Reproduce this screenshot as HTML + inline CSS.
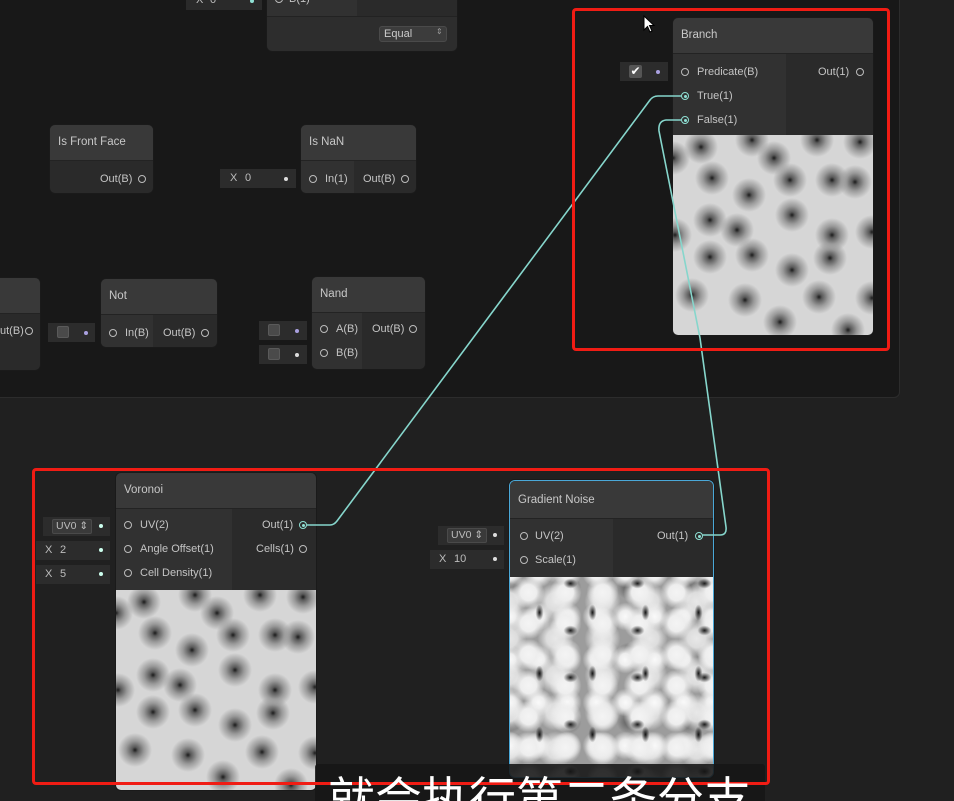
<!DOCTYPE html>
<html style="overflow:hidden;width:954px;height:801px"><head><meta charset="utf-8">
<style>
*{margin:0;padding:0;box-sizing:border-box}
body{width:954px;height:801px;background:#202020;position:relative;overflow:hidden;font-family:"Liberation Sans","Noto Sans CJK SC",sans-serif;color:#c4c4c4;font-size:11px}
.a{position:absolute}
.group{left:-10px;top:-10px;width:910px;height:408px;background:#181818;border:1px solid #2c2c2c;border-radius:6px}
.node{position:absolute;background:#2a2a2a;border-radius:5px;overflow:hidden;box-shadow:0 0 0 1px #1a1a1a}
.hd{position:absolute;left:0;top:0;right:0;background:#393939;border-bottom:1px solid #232323;color:#c8c8c8;font-size:11.5px;padding-left:8px}
.inp{position:absolute;background:#313131}
.fld{position:absolute;background:#2c2c2c;color:#bdbdbd;font-size:11px}
.t{position:absolute;white-space:nowrap}
.port{position:absolute;width:8px;height:8px;border:1px solid #bbb;border-radius:50%}
.port.on{border-color:#8fe0d4}
.port.on::after{content:"";position:absolute;left:1.5px;top:1.5px;width:3px;height:3px;border-radius:50%;background:#8fe0d4}
.dot{position:absolute;width:4px;height:4px;border-radius:50%;background:#ddd}
.cb{position:absolute;width:12px;height:12px;background:#4a4a4a;border:1px solid #5a5a5a;border-radius:2px}
.red{position:absolute;border:3px solid #f01c14;border-radius:4px}
.dd{position:absolute;left:9px;top:2px;width:40px;height:15px;background:#3a3a3a;border:1px solid #4a4a4a;border-radius:2px;font-size:10.5px;padding-left:3px;line-height:13px;white-space:nowrap}
.vor{background-color:#d6d6d6;
--s:#1a1a1a 0,#5a5a5a 3px,#9a9a9a 9px,rgba(200,200,200,0) 17px;
background-image:
radial-gradient(circle at 28px 12px,var(--s)),
radial-gradient(circle at 79px 5px,var(--s)),
radial-gradient(circle at 101px 23px,var(--s)),
radial-gradient(circle at 144px 5px,var(--s)),
radial-gradient(circle at 187px 7px,var(--s)),
radial-gradient(circle at 39px 43px,var(--s)),
radial-gradient(circle at 76px 60px,var(--s)),
radial-gradient(circle at 117px 45px,var(--s)),
radial-gradient(circle at 159px 45px,var(--s)),
radial-gradient(circle at 182px 47px,var(--s)),
radial-gradient(circle at 37px 85px,var(--s)),
radial-gradient(circle at 64px 95px,var(--s)),
radial-gradient(circle at 119px 80px,var(--s)),
radial-gradient(circle at 159px 100px,var(--s)),
radial-gradient(circle at 37px 122px,var(--s)),
radial-gradient(circle at 79px 120px,var(--s)),
radial-gradient(circle at 119px 135px,var(--s)),
radial-gradient(circle at 157px 123px,var(--s)),
radial-gradient(circle at 19px 160px,var(--s)),
radial-gradient(circle at 72px 165px,var(--s)),
radial-gradient(circle at 146px 162px,var(--s)),
radial-gradient(circle at 107px 187px,var(--s)),
radial-gradient(circle at 0px 23px,var(--s)),
radial-gradient(circle at 2px 100px,var(--s)),
radial-gradient(circle at 199px 97px,var(--s)),
radial-gradient(circle at 199px 163px,var(--s)),
radial-gradient(circle at 175px 195px,var(--s))}
.gn{background-color:#9c9c9c;
background-image:
radial-gradient(ellipse 4px 8px,#111 0,rgba(0,0,0,0) 100%),
radial-gradient(ellipse 7px 5px,#1a1a1a 0,rgba(0,0,0,0) 100%),
radial-gradient(circle,#f4f4f4 0,#eee 8px,rgba(238,238,238,0) 16px),
radial-gradient(circle,#fafafa 0,#eee 6px,rgba(238,238,238,0) 14px),
radial-gradient(circle,#e8e8e8 0,#ddd 9px,rgba(220,220,220,0) 18px),
radial-gradient(circle,#555 0,rgba(60,60,60,0) 12px);
background-size:53px 61px,67px 47px,37px 31px,29px 43px,47px 37px,59px 67px;
background-position:3px 5px,27px 30px,0 0,14px 18px,22px 6px,30px 44px}
</style></head><body>

<div class="a group"></div>

<div class="fld" style="left:186px;top:-8px;width:76px;height:18px;background:#2a2a2a"><span class="t" style="left:10px;top:2px">X</span><span class="t" style="left:24px;top:2px">0</span></div>
<div class="dot" style="left:250px;top:-1px;background:#8fe0d4"></div>
<div class="node" style="left:267px;top:-10px;width:190px;height:61px;background:#2d2d2d">
  <div class="a" style="left:0;top:0;width:90px;height:26px;background:#313131"></div>
  <div class="a" style="left:90px;top:0;right:0;height:26px;background:#2a2a2a"></div>
  <div class="a" style="left:0;top:26px;right:0;height:1px;background:#222"></div>
  <div class="port" style="left:8px;top:5px"></div>
  <span class="t" style="left:22px;top:3px">B(1)</span>
  <div class="a" style="left:112px;top:36px;width:68px;height:16px;background:#3c3c3c;border:1px solid #4a4a4a;border-radius:3px"><span class="t" style="left:4px;top:1px;color:#ccc">Equal</span><span class="t" style="left:56px;top:0px;font-size:8px;color:#999">⇕</span></div>
</div>

<div class="node" style="left:50px;top:125px;width:103px;height:68px">
  <div class="hd" style="height:36px;line-height:35px">Is Front Face</div>
  <span class="t" style="left:50px;top:48px">Out(B)</span>
  <div class="port" style="left:88px;top:50px"></div>
</div>

<div class="fld" style="left:220px;top:169px;width:76px;height:19px"><span class="t" style="left:10px;top:3px">X</span><span class="t" style="left:25px;top:3px">0</span></div>
<div class="dot" style="left:284px;top:177px"></div>
<div class="node" style="left:301px;top:125px;width:115px;height:68px">
  <div class="hd" style="height:36px;line-height:35px">Is NaN</div>
  <div class="inp" style="left:0;top:36px;width:53px;height:32px"></div>
  <div class="port" style="left:8px;top:50px"></div>
  <span class="t" style="left:24px;top:48px">In(1)</span>
  <span class="t" style="left:62px;top:48px">Out(B)</span>
  <div class="port" style="left:100px;top:50px"></div>
</div>

<div class="node" style="left:-60px;top:278px;width:100px;height:92px">
  <div class="hd" style="height:36px"></div>
  <span class="t" style="left:60px;top:47px">ut(B)</span>
  <div class="port" style="left:85px;top:49px"></div>
</div>

<div class="fld" style="left:48px;top:323px;width:47px;height:19px"><div class="cb" style="left:9px;top:3px"></div></div>
<div class="dot" style="left:84px;top:331px;background:#a9a0e0"></div>
<div class="node" style="left:101px;top:279px;width:116px;height:68px">
  <div class="hd" style="height:36px;line-height:35px">Not</div>
  <div class="inp" style="left:0;top:36px;width:52px;height:32px"></div>
  <div class="port" style="left:8px;top:50px"></div>
  <span class="t" style="left:24px;top:48px">In(B)</span>
  <span class="t" style="left:62px;top:48px">Out(B)</span>
  <div class="port" style="left:100px;top:50px"></div>
</div>

<div class="fld" style="left:259px;top:321px;width:48px;height:19px"><div class="cb" style="left:9px;top:3px"></div></div>
<div class="fld" style="left:259px;top:345px;width:48px;height:19px"><div class="cb" style="left:9px;top:3px"></div></div>
<div class="dot" style="left:295px;top:329px;background:#a9a0e0"></div>
<div class="dot" style="left:295px;top:353px"></div>
<div class="node" style="left:312px;top:277px;width:113px;height:92px">
  <div class="hd" style="height:36px;line-height:35px">Nand</div>
  <div class="inp" style="left:0;top:36px;width:50px;height:56px"></div>
  <div class="port" style="left:8px;top:48px"></div>
  <span class="t" style="left:24px;top:46px">A(B)</span>
  <div class="port" style="left:8px;top:72px"></div>
  <span class="t" style="left:24px;top:70px">B(B)</span>
  <span class="t" style="left:60px;top:46px">Out(B)</span>
  <div class="port" style="left:97px;top:48px"></div>
</div>

<div class="fld" style="left:620px;top:62px;width:48px;height:19px"><div class="a" style="left:9px;top:3px;width:13px;height:13px;background:#555;border-radius:2px;color:#fff;font-size:12px;line-height:12px;text-align:center">✔</div></div>
<div class="dot" style="left:656px;top:70px;background:#a9a0e0"></div>
<div class="node" style="left:673px;top:18px;width:200px;height:317px">
  <div class="hd" style="height:36px;line-height:35px">Branch</div>
  <div class="inp" style="left:0;top:36px;width:113px;height:81px"></div>
  <div class="port" style="left:8px;top:50px"></div>
  <span class="t" style="left:24px;top:48px">Predicate(B)</span>
  <div class="port on" style="left:8px;top:74px"></div>
  <span class="t" style="left:24px;top:72px">True(1)</span>
  <div class="port on" style="left:8px;top:98px"></div>
  <span class="t" style="left:24px;top:96px">False(1)</span>
  <span class="t" style="left:145px;top:48px">Out(1)</span>
  <div class="port" style="left:183px;top:50px"></div>
  <div class="a vor" style="left:0;top:117px;width:200px;height:200px"></div>
</div>

<div class="fld" style="left:43px;top:517px;width:67px;height:19px"><div class="dd">UV0 ⇕</div></div>
<div class="fld" style="left:36px;top:541px;width:74px;height:19px"><span class="t" style="left:9px;top:3px">X</span><span class="t" style="left:24px;top:3px">2</span></div>
<div class="fld" style="left:36px;top:565px;width:74px;height:19px"><span class="t" style="left:9px;top:3px">X</span><span class="t" style="left:24px;top:3px">5</span></div>
<div class="dot" style="left:99px;top:524px;background:#cfe"></div>
<div class="dot" style="left:99px;top:548px;background:#cfe"></div>
<div class="dot" style="left:99px;top:572px;background:#cfe"></div>
<div class="node" style="left:116px;top:473px;width:200px;height:317px">
  <div class="hd" style="height:36px;line-height:35px">Voronoi</div>
  <div class="inp" style="left:0;top:36px;width:116px;height:81px"></div>
  <div class="port" style="left:8px;top:48px"></div>
  <span class="t" style="left:24px;top:46px">UV(2)</span>
  <div class="port" style="left:8px;top:72px"></div>
  <span class="t" style="left:24px;top:70px">Angle Offset(1)</span>
  <div class="port" style="left:8px;top:96px"></div>
  <span class="t" style="left:24px;top:94px">Cell Density(1)</span>
  <span class="t" style="left:146px;top:46px">Out(1)</span>
  <div class="port on" style="left:183px;top:48px"></div>
  <span class="t" style="left:140px;top:70px">Cells(1)</span>
  <div class="port" style="left:183px;top:72px"></div>
  <div class="a vor" style="left:0;top:117px;width:200px;height:200px"></div>
</div>

<div class="fld" style="left:438px;top:526px;width:66px;height:19px"><div class="dd">UV0 ⇕</div></div>
<div class="fld" style="left:430px;top:550px;width:74px;height:19px"><span class="t" style="left:9px;top:3px">X</span><span class="t" style="left:24px;top:3px">10</span></div>
<div class="dot" style="left:493px;top:533px"></div>
<div class="dot" style="left:493px;top:557px"></div>
<div class="node" style="left:509px;top:480px;width:205px;height:298px;border:1px solid #4aa8d8;border-radius:6px">
  <div class="hd" style="height:38px;line-height:38px">Gradient Noise</div>
  <div class="inp" style="left:0;top:38px;width:103px;height:58px"></div>
  <div class="port" style="left:10px;top:51px"></div>
  <span class="t" style="left:25px;top:49px">UV(2)</span>
  <div class="port" style="left:10px;top:75px"></div>
  <span class="t" style="left:25px;top:73px">Scale(1)</span>
  <span class="t" style="left:147px;top:49px">Out(1)</span>
  <div class="port on" style="left:185px;top:51px"></div>
  <div class="a gn" style="left:0;top:96px;width:203px;height:200px"></div>
</div>

<svg class="a" style="left:0;top:0" width="954" height="801">
  <g fill="none" stroke="#86d6cc" stroke-width="1.6">
    <path d="M307 525 L330 525 Q334 525 337 521 L650 100 Q653 96 658 96 L681 96"/>
    <path d="M702 535 L720 535 Q727 535 726 527 L700 338 L659 131 Q658 121 666 120 L681 120"/>
  </g>
</svg>

<div class="red" style="left:572px;top:8px;width:318px;height:343px"></div>

<div class="a" style="left:315px;top:764px;width:450px;height:40px;background:rgba(22,22,22,0.88);border-radius:3px"></div>
<div class="red" style="left:32px;top:468px;width:738px;height:317px"></div>
<div class="a" style="left:0;top:0;width:954px;height:801px;overflow:hidden">
<div class="t" style="left:328px;top:766px;font-size:47px;line-height:60px;color:#fff;font-family:'Noto Sans CJK SC',sans-serif">就会执行第二条分支</div>
</div>

<svg class="a" style="left:643px;top:15px" width="14" height="20"><path d="M1 1 L1 15 L4.5 11.5 L7 17 L9 16 L6.5 10.5 L11 10.5 Z" fill="#fff" stroke="#000" stroke-width="1"/></svg>
</body></html>
